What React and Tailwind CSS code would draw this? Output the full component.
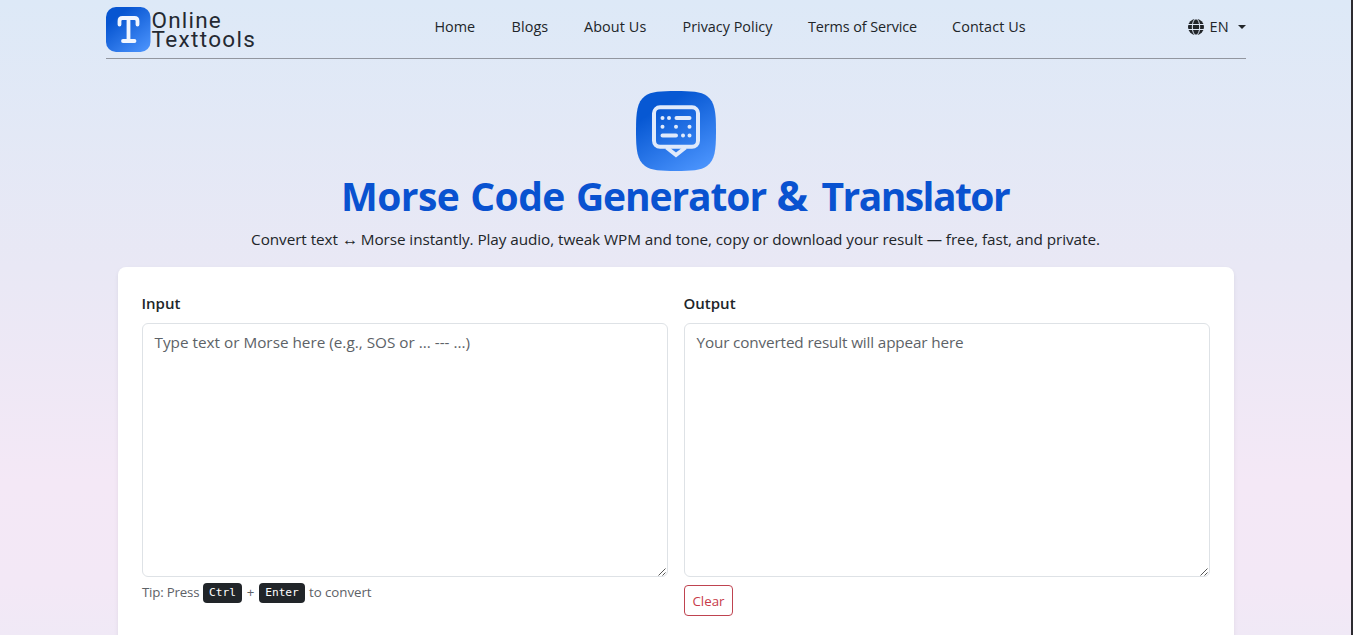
const links = [
  { label: 'Home', cls: 'w-[41px] tracking-[0px]' },
  { label: 'Blogs', cls: 'w-[36.5px] tracking-[0.1px]' },
  { label: 'About Us', cls: 'w-[62.5px] tracking-[0.1px]' },
  { label: 'Privacy Policy', cls: 'w-[89.5px] tracking-[0px]' },
  { label: 'Terms of Service', cls: 'w-[108px] tracking-[-0.1px]' },
  { label: 'Contact Us', cls: 'w-[74px] tracking-[0.1px]' },
];

function Logo() {
  return (
    <div className="flex h-[45px] w-[160px] gap-[0.5px]">
      <svg width="45" height="45" viewBox="0 0 45 45" className="shrink-0">
        <defs>
          <linearGradient id="logoFill" x1="0.1" y1="0" x2="0.9" y2="1">
            <stop offset="0.2" stopColor="#0755d1" />
            <stop offset="1" stopColor="#4b93fc" />
          </linearGradient>
        </defs>
        <rect width="44.500" height="45" rx="10" fill="url(#logoFill)" />
        <path d="M13.500 17.500v-3.500q0-3 3-3h12q3 0 3 3v3.500M22.500 11v23M17 34h11.500" fill="none" stroke="#f1f6ff" strokeWidth="3.800" strokeLinecap="round" strokeLinejoin="round" />
      </svg>
      <div className="flex flex-col pt-[4px] font-['Roboto',sans-serif] text-[22.5px] leading-[19px] text-[#242932] whitespace-nowrap">
        <span className="tracking-[1.2px]">Online</span>
        <span className="tracking-[1.35px]">Texttools</span>
      </div>
    </div>
  );
}

function Globe() {
  return (
    <svg width="16" height="16" viewBox="0 0 16 16" className="shrink-0">
      <circle cx="8" cy="8" r="8" fill="#212529" />
      <path d="M0 5.500h16M0 10.500h16" stroke="#dfe8f6" strokeWidth="1" />
      <ellipse cx="8" cy="8" rx="3.700" ry="8.200" fill="none" stroke="#dfe8f6" strokeWidth="1" />
    </svg>
  );
}

function MorseIcon() {
  return (
    <svg width="80" height="80" viewBox="0 0 80 80" className="mx-auto block">
      <defs>
        <linearGradient id="morseFill" x1="0.2" y1="0" x2="0.8" y2="1">
          <stop offset="0.2" stopColor="#0758d3" />
          <stop offset="1" stopColor="#4b94fd" />
        </linearGradient>
      </defs>
      <path d="M40 0C55 0 65 .5 71 5C79 11 80 21 80 40S79 69 71 75C65 79.500 55 80 40 80S15 79.500 9 75C1 69 0 59 0 40S1 11 9 5C15 .5 25 0 40 0Z" fill="url(#morseFill)" />
      <g fill="none" stroke="#e0eafb" strokeWidth="4" strokeLinejoin="round">
        <rect x="18" y="16.300" width="44" height="39.500" rx="6" />
        <path d="M30.500 56.500L40 64L49.500 56.500" strokeLinejoin="miter" />
      </g>
      <g fill="none" stroke="#e0eafb" strokeWidth="4" strokeLinecap="round">
        <path d="M26.500 27h.01M33 27h.01M40.500 27h13M26.500 35.700h.01M40 35.700h.01M53.500 35.700h.01M26.500 44.500h13.500M47 44.500h.01M53.500 44.500h.01" />
      </g>
    </svg>
  );
}

function Area({ placeholder, cls }) {
  return (
    <div className="relative h-[254px] w-[526px]">
      <textarea
        placeholder={placeholder}
        className={'block h-full w-full resize-none rounded-[6px] border border-[#dee2e6] bg-white px-[11.5px] py-[6px] text-[15.3px] leading-[24px] placeholder:text-[#5d6267] outline-none ' + cls}
      />
      <svg width="8" height="8" viewBox="0 0 8 8" className="absolute right-[2px] bottom-[1px]">
        <path d="M.5 7.500L7.500 .5M4.500 7.500L7.500 4.500" stroke="#555" strokeWidth="1" fill="none" />
      </svg>
    </div>
  );
}

export default function App() {
  return (
    <div className="flex h-[635px] w-[1353px] overflow-hidden bg-[#2c2b30] font-['Open_Sans','Noto_Sans',sans-serif] text-[#212529]">
      <div className="h-full w-[1351px] bg-[linear-gradient(180deg,#dde9f7_0%,#e9e8f5_42%,#f4e8f6_76%,#f3e8f6_92%,#f0e9f6_100%)]">
        <header className="ml-[106px] flex h-[59px] w-[1140px] items-start border-b border-[#92969f] pt-[7px]">
          <Logo />
          <nav className="ml-[168.5px] flex gap-[36px] pt-[9px] text-[14.4px] leading-[22px]">
            {links.map((l) => (
              <a key={l.label} className={'block whitespace-nowrap ' + l.cls}>{l.label}</a>
            ))}
          </nav>
          <div className="ml-auto flex items-center pt-[9px] text-[14.5px] leading-[22px]">
            <Globe />
            <span className="ml-[5px] tracking-[0.3px]">EN</span>
            <span className="ml-[9px] border-x-[4px] border-t-[4px] border-x-transparent border-t-[#212529]" />
          </div>
        </header>
        <main className="ml-[118px] w-[1116px] pt-[32px]">
          <MorseIcon />
          <h1 className="mt-[1px] mb-[7px] h-[48px] pr-[2px] text-center text-[39px] leading-[48px] font-bold [word-spacing:1.5px] whitespace-nowrap text-[#0952d0]">
            <span className="tracking-[-0.55px]">Morse Code </span>
            <span className="tracking-[-1.1px]">Generator </span>
            <span className="text-[42px] leading-[40px] tracking-[0.5px]">&amp; </span>
            <span className="tracking-[-1.55px]">Translator</span>
          </h1>
          <p className="pr-[1px] text-center text-[15.3px] leading-[24px] tracking-[-0.07px] whitespace-nowrap">Convert text <span className="text-[16.5px] leading-[20px] tracking-[-1.5px]">↔</span> Morse instantly. Play audio, tweak WPM and tone, copy or download your result — free, fast, and private.</p>
          <section className="mt-[16px] flex h-[420px] gap-[16px] rounded-[8px] bg-white px-[24px] pt-[24px] shadow-[0_2px_4px_rgba(0,0,0,0.075)]">
            <div className="w-[526px]">
              <label className="-ml-[0.5px] mb-[8px] block text-[15px] leading-[24px] font-semibold">Input</label>
              <Area placeholder="Type text or Morse here (e.g., SOS or ... --- ...)" cls="" />
              <div className="mt-[6px] flex h-[20px] items-center text-[13.3px] whitespace-nowrap text-[#5d6267]">
                <span className="w-[61px] tracking-[-0.2px]">Tip: Press</span>
                <kbd className="flex h-[20px] w-[39px] items-center justify-center rounded-[4px] bg-[#212529] pt-[1px] font-['DejaVu_Sans_Mono',monospace] text-[11.2px] font-medium text-white">Ctrl</kbd>
                <span className="w-[17px] text-center">+</span>
                <kbd className="flex h-[20px] w-[46px] items-center justify-center rounded-[4px] bg-[#212529] pt-[1px] font-['DejaVu_Sans_Mono',monospace] text-[11.2px] font-medium text-white">Enter</kbd>
                <span className="ml-[4px] tracking-[-0.05px]">to convert</span>
              </div>
            </div>
            <div className="w-[526px]">
              <label className="-ml-[0.5px] mb-[8px] block text-[15px] leading-[24px] font-semibold">Output</label>
              <Area placeholder="Your converted result will appear here" cls="tracking-[-0.15px]" />
              <button className="mt-[8px] flex h-[31px] w-[49px] items-center justify-center rounded-[4px] border border-[#bf4350] pt-[2px] text-[13.3px] text-[#c73b4a]">Clear</button>
            </div>
          </section>
        </main>
      </div>
    </div>
  );
}
